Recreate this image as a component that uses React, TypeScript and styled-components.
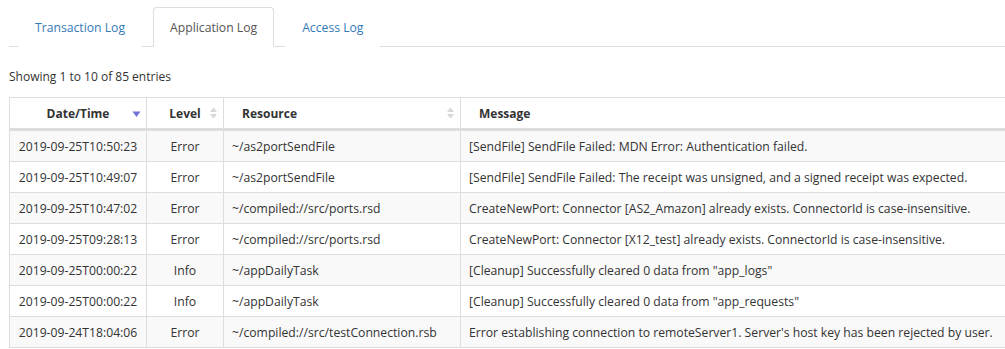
import React from "react";
import styled, { createGlobalStyle } from "styled-components";

interface LogRow {
  time: string;
  level: string;
  resource: string;
  message: string;
}

const rows: LogRow[] = [
  {
    time: "2019-09-25T10:50:23",
    level: "Error",
    resource: "~/as2portSendFile",
    message: "[SendFile] SendFile Failed: MDN Error: Authentication failed.",
  },
  {
    time: "2019-09-25T10:49:07",
    level: "Error",
    resource: "~/as2portSendFile",
    message:
      "[SendFile] SendFile Failed: The receipt was unsigned, and a signed receipt was expected.",
  },
  {
    time: "2019-09-25T10:47:02",
    level: "Error",
    resource: "~/compiled://src/ports.rsd",
    message:
      "CreateNewPort: Connector [AS2_Amazon] already exists. ConnectorId is case-insensitive.",
  },
  {
    time: "2019-09-25T09:28:13",
    level: "Error",
    resource: "~/compiled://src/ports.rsd",
    message:
      "CreateNewPort: Connector [X12_test] already exists. ConnectorId is case-insensitive.",
  },
  {
    time: "2019-09-25T00:00:22",
    level: "Info",
    resource: "~/appDailyTask",
    message: '[Cleanup] Successfully cleared 0 data from "app_logs"',
  },
  {
    time: "2019-09-25T00:00:22",
    level: "Info",
    resource: "~/appDailyTask",
    message: '[Cleanup] Successfully cleared 0 data from "app_requests"',
  },
  {
    time: "2019-09-24T18:04:06",
    level: "Error",
    resource: "~/compiled://src/testConnection.rsb",
    message:
      "Error establishing connection to remoteServer1. Server's host key has been rejected by user.",
  },
];

const tabs = ["Transaction Log", "Application Log", "Access Log"];

const SortIcon = ({ active }: { active?: boolean }) =>
  active ? (
    <svg width="9" height="12" viewBox="0 0 9 12">
      <path d="M0.5 4.5 L8.5 4.5 L4.5 10 Z" fill="#6f72d6" />
    </svg>
  ) : (
    <svg width="9" height="14" viewBox="0 0 9 14">
      <path d="M1 6 L8 6 L4.5 1.5 Z" fill="#d8d8d8" />
      <path d="M1 8 L8 8 L4.5 12.5 Z" fill="#d8d8d8" />
    </svg>
  );

const App = () => {
  return (
    <Page>
      <GlobalStyle />
      <TabBar>
        {tabs.map(tab => (
          <Tab key={tab} active={tab === "Application Log"}>
            {tab}
          </Tab>
        ))}
      </TabBar>
      <Info>Showing 1 to 10 of 85 entries</Info>
      <Table>
        <colgroup>
          <col style={{ width: 137 }} />
          <col style={{ width: 77 }} />
          <col style={{ width: 237 }} />
          <col />
        </colgroup>
        <thead>
          <tr>
            <Th align="center">
              Date/Time
              <Sorter>
                <SortIcon active />
              </Sorter>
            </Th>
            <Th align="center">
              Level
              <Sorter>
                <SortIcon />
              </Sorter>
            </Th>
            <Th align="left">
              Resource
              <Sorter>
                <SortIcon />
              </Sorter>
            </Th>
            <Th align="left">Message</Th>
          </tr>
        </thead>
        <tbody>
          {rows.map((row, idx) => (
            <Row key={idx} striped={idx % 2 === 0}>
              <Td align="center">{row.time}</Td>
              <Td align="center">{row.level}</Td>
              <Td align="left">{row.resource}</Td>
              <Td align="left">{row.message}</Td>
            </Row>
          ))}
        </tbody>
      </Table>
    </Page>
  );
};

export default App;

const GlobalStyle = createGlobalStyle`
  html, body {
    margin: 0;
    padding: 0;
    overflow: hidden;
    background: #ffffff;
  }
  body {
    font-family: "Open Sans", "Liberation Sans", sans-serif;
    font-size: 12px;
    color: #333333;
  }
`;

const Page = styled.div`
  padding: 7px 0 0 9px;
  width: 1010px;
`;

const TabBar = styled.div`
  display: flex;
  gap: 11px;
  padding-left: 9px;
  border-bottom: 1px solid #dddddd;
  height: 39px;
`;

const Tab = styled.div<{ active?: boolean }>`
  display: flex;
  align-items: center;
  padding: 0 16px;
  height: 40px;
  box-sizing: border-box;
  font-size: 12.2px;
  color: ${props => (props.active ? "#555555" : "#337ab7")};
  background: #ffffff;
  border: 1px solid ${props => (props.active ? "#dddddd" : "transparent")};
  border-bottom-color: ${props => (props.active ? "#ffffff" : "transparent")};
  border-radius: 4px 4px 0 0;
  cursor: pointer;
`;

const Info = styled.div`
  font-size: 12px;
  color: #333333;
  margin: 21px 0 12px 0;
  line-height: 17px;
`;

const Table = styled.table`
  width: 1010px;
  table-layout: fixed;
  border-collapse: collapse;
  border: 1px solid #dddddd;
`;

const Th = styled.th<{ align: "left" | "center" }>`
  position: relative;
  text-align: ${props => props.align};
  font-weight: 700;
  font-size: 12px;
  color: #333333;
  height: 30px;
  padding: 0 18px;
  border: 1px solid #dddddd;
  border-bottom: 3px solid #dddddd;
  white-space: nowrap;
`;

const Sorter = styled.span`
  position: absolute;
  right: 5px;
  top: 50%;
  transform: translateY(-50%);
  display: flex;
`;

const Row = styled.tr<{ striped: boolean }>`
  background: ${props => (props.striped ? "#f9f9f9" : "#ffffff")};
`;

const Td = styled.td<{ align: "left" | "center" }>`
  text-align: ${props => props.align};
  font-size: 12.2px;
  color: #333333;
  height: 30px;
  padding: 0 8px;
  border: 1px solid #dddddd;
  white-space: nowrap;
  overflow: hidden;
`;
